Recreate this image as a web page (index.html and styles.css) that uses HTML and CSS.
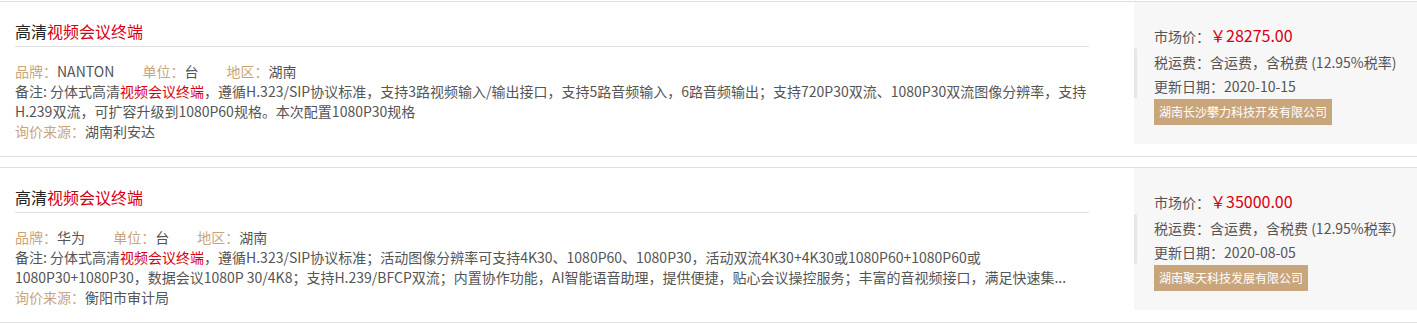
FILE: index.html
```html
<!DOCTYPE html>
<html lang="zh-CN">

<head>
  <meta charset="UTF-8" />
  <title>询价结果</title>
  <link rel="stylesheet" href="styles.css">
</head>

<body>
  <div id="resultList">

    <div class="item">
      <div class="item-main">
        <div class="item-title">高清<em class="hl">视频会议终端</em></div>
        <div class="item-meta">
          <span class="meta"><span class="label">品牌：</span>NANTON</span>
          <span class="meta"><span class="label">单位：</span>台</span>
          <span class="meta"><span class="label">地区：</span>湖南</span>
        </div>
        <div class="item-note">备注: 分体式高清<em class="hl">视频会议终端</em>，遵循H.323/SIP协议标准，支持3路视频输入/输出接口，支持5路音频输入，6路音频输出；支持720P30双流、1080P30双流图像分辨率，支持H.239双流，可扩容升级到1080P60规格。本次配置1080P30规格</div>
        <div class="item-source"><span class="label">询价来源：</span>湖南利安达</div>
      </div>
      <div class="item-side">
        <div class="price-line">市场价：<span class="price">￥28275.00</span></div>
        <div class="side-line">税运费：含运费，含税费 (12.95%税率)</div>
        <div class="side-line">更新日期：2020-10-15</div>
        <div class="supplier">湖南长沙攀力科技开发有限公司</div>
      </div>
    </div>

    <div class="item">
      <div class="item-main">
        <div class="item-title">高清<em class="hl">视频会议终端</em></div>
        <div class="item-meta">
          <span class="meta"><span class="label">品牌：</span>华为</span>
          <span class="meta"><span class="label">单位：</span>台</span>
          <span class="meta"><span class="label">地区：</span>湖南</span>
        </div>
        <div class="item-note">备注: 分体式高清<em class="hl">视频会议终端</em>，遵循H.323/SIP协议标准；活动图像分辨率可支持4K30、1080P60、1080P30，活动双流4K30+4K30或1080P60+1080P60或1080P30+1080P30，数据会议1080P 30/4K8；支持H.239/BFCP双流；内置协作功能，AI智能语音助理，提供便捷，贴心会议操控服务；丰富的音视频接口，满足快速集...</div>
        <div class="item-source"><span class="label">询价来源：</span>衡阳市审计局</div>
      </div>
      <div class="item-side">
        <div class="price-line">市场价：<span class="price">￥35000.00</span></div>
        <div class="side-line">税运费：含运费，含税费 (12.95%税率)</div>
        <div class="side-line">更新日期：2020-08-05</div>
        <div class="supplier">湖南聚天科技发展有限公司</div>
      </div>
    </div>

  </div>
</body>

</html>
```

FILE: styles.css
```css
:root {
  --line: #e0e0e0;
  --red: #d7000f;
  --tan: #c9a57c;
  --text: #555;
}

* {
  margin: 0;
  padding: 0;
  box-sizing: border-box;
}

html,
body {
  background: #fff;
  font-family: 'Microsoft YaHei', 'Noto Sans CJK SC', sans-serif;
  font-size: 14px;
  color: var(--text);
  overflow: hidden;
}

#resultList {
  padding-top: 1px;
  display: flex;
  flex-direction: column;
  gap: 10px;
}

.item {
  display: flex;
  border-top: 1px solid var(--line);
  border-bottom: 1px solid var(--line);
  height: 156px;
  padding-bottom: 12px;
}

.item-main {
  flex: 1;
  padding: 15px 45px 0 15px;
  min-width: 0;
}

.item-title {
  font-size: 16px;
  line-height: 29px;
  color: #222;
  border-bottom: 1px solid var(--line);
}

.hl {
  font-style: normal;
  color: var(--red);
}

.item-meta {
  margin-top: 14px;
  line-height: 20px;
}

.meta {
  margin-right: 25px;
}

.label {
  color: var(--tan);
}

.item-note {
  line-height: 20px;
  display: -webkit-box;
  -webkit-line-clamp: 2;
  -webkit-box-orient: vertical;
  overflow: hidden;
}

.item-source {
  line-height: 21px;
}

.item-side {
  flex: 0 0 283px;
  position: relative;
  background: #f7f7f7;
  padding: 19px 0 0 20px;
}

/* thin scroll mark on the panel edge */
.item-side::before {
  content: '';
  position: absolute;
  left: 0;
  top: 46px;
  width: 3px;
  height: 50px;
  border-radius: 2px;
  background: #e6e6e6;
}

.price-line {
  line-height: 28px;
}

.price {
  color: var(--red);
  font-size: 16px;
}

.side-line {
  line-height: 24px;
}

.supplier {
  display: inline-block;
  margin-top: 1px;
  padding: 0 5px;
  height: 26px;
  line-height: 26px;
  font-size: 12px;
  color: #fff;
  background: var(--tan);
}
```
